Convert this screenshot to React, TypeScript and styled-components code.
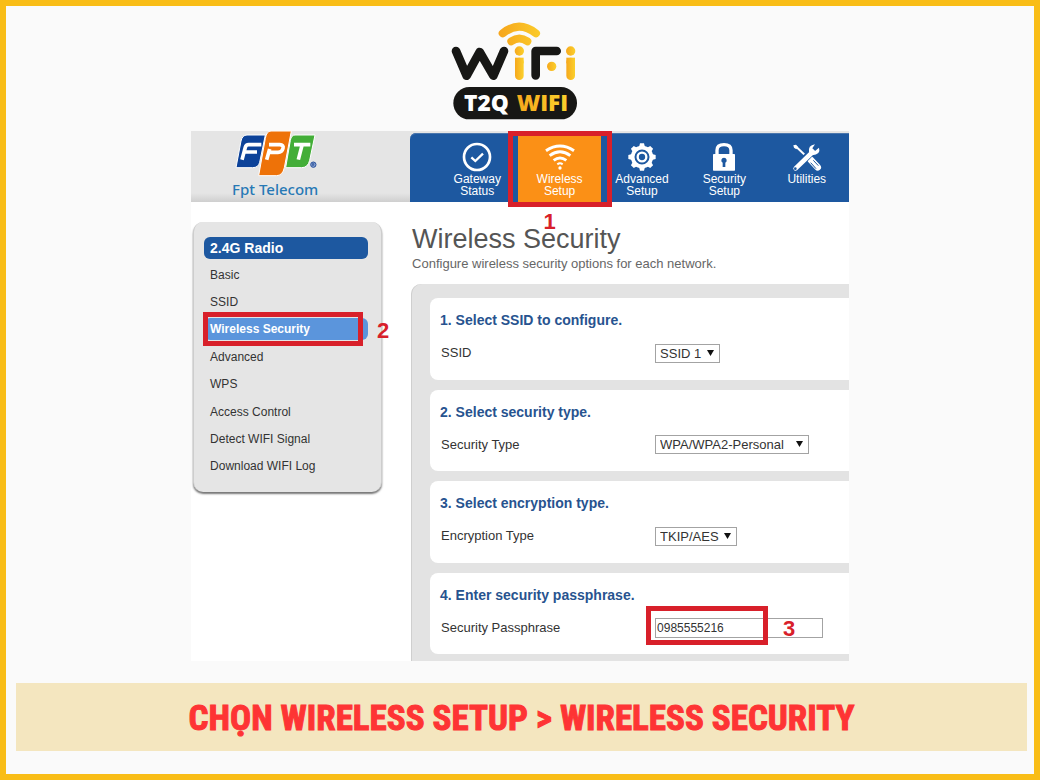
import React from "react";
import styled, { createGlobalStyle, css } from "styled-components";

const sans = `"Liberation Sans", Arial, sans-serif`;
const red = "#d8202a";

const GlobalStyle = createGlobalStyle`
  *, *::before, *::after { box-sizing: border-box; }
  body { margin: 0; background: #fafafa; font-family: ${sans}; }
  h1, h2, h3, p, ul { margin: 0; padding: 0; }
`;

const Page = styled.div`
  min-height: 100vh;
  display: flex;
  flex-direction: column;
  align-items: center;
  padding: 14px 0 23px;
  border: 6px solid #f9bd16;
  background: #fafafa;
`;

const BrandMark = styled.svg`
  display: block;
  width: 140px;
  height: 100px;
  flex: none;
`;

const Screen = styled.main`
  width: 64%;
  min-width: 600px;
  margin: 11px 0 22px;
  background: #fff;
  overflow: hidden;
`;

const TopBar = styled.header`
  position: relative;
  z-index: 2;
  display: grid;
  grid-template-columns: 219px 1fr;
  height: 71px;
  background: linear-gradient(#e5e5e5 0 62px, #cfcfcf 100%);
`;

const Carrier = styled.div`
  display: flex;
  flex-direction: column;
  padding-left: 41px;
`;

const CarrierLogo = styled.svg`
  display: block;
  width: 86px;
  height: 46px;
`;

const CarrierName = styled.span`
  font: 500 15px/25px "Noto Sans", "Open Sans", sans-serif;
  color: #2779b5;
  white-space: nowrap;
`;

const Nav = styled.nav`
  display: grid;
  grid-template-columns: repeat(5, 1fr);
  margin-top: 2px;
  padding: 1px 1px 0 26px;
  background: #1d58a0;
  border-top-left-radius: 6px;
  box-shadow: inset 0 1px 0 #4a76ad;
`;

const NavItem = styled.a<{ $active?: boolean }>`
  position: relative;
  display: flex;
  flex-direction: column;
  align-items: center;
  padding-top: 8px;
  font-size: 12px;
  line-height: 12px;
  text-align: center;
  text-decoration: none;
  color: #fff;
  background: ${(p) => (p.$active ? "#fb9016" : "transparent")};
`;

const NavIcon = styled.svg`
  display: block;
  width: 32px;
  height: 30px;
  margin-bottom: 1px;
`;

const NavText = styled.span`
  width: min-content;
`;

const Body = styled.div`
  display: grid;
  grid-template-columns: 219px 1fr;
  align-items: start;
`;

const Sidebar = styled.aside`
  margin: 20px 28px 0 2px;
  padding: 15px 13px 12px 10px;
  border-radius: 10px;
  background: #e5e5e5;
  border: solid #cdcdcd;
  border-width: 0 1px;
  box-shadow: 0 2px 2px #777;
`;

const SideTitle = styled.h2`
  padding: 0 6px;
  border-radius: 6px;
  background: #1d58a0;
  color: #fff;
  font-size: 14px;
  line-height: 22px;
`;

const SideList = styled.ul`
  display: grid;
  grid-auto-rows: 1fr;
  align-items: center;
  min-height: 221px;
  padding-top: 2px;
  list-style: none;
`;

const SideItem = styled.li`
  position: relative;
`;

const SideLink = styled.a<{ $active?: boolean }>`
  display: block;
  padding: 0 6px;
  border-radius: 6px;
  font-size: 12px;
  line-height: 22px;
  text-decoration: none;
  color: #333;
  white-space: nowrap;
  ${(p) =>
    p.$active &&
    css`
      background: #5b95dc;
      color: #fff;
      font-weight: bold;
    `}
`;

const Content = styled.section`
  padding-top: 21px;
`;

const Title = styled.h1`
  padding-left: 2px;
  font-size: 27px;
  line-height: 32px;
  font-weight: normal;
  color: #555;
`;

const Subtitle = styled.p`
  padding-left: 2px;
  font-size: 13px;
  line-height: 18px;
  color: #666;
`;

const Steps = styled.form`
  display: grid;
  grid-auto-rows: 1fr;
  gap: 10px;
  min-height: 377px;
  margin: 11px 0 0 1px;
  padding: 14px 0 7px 19px;
  background: #e3e3e3;
  border-top-left-radius: 10px;
  box-shadow: inset 1px 0 0 #cfcfcf;
`;

const Step = styled.div`
  padding: 13px 10px;
  border-radius: 8px 0 0 8px;
  background: #fff;
`;

const StepTitle = styled.h3`
  font-size: 14px;
  line-height: 18px;
  color: #27538f;
`;

const Field = styled.div`
  display: grid;
  grid-template-columns: 214px 1fr;
  align-items: center;
  margin: 14px 0 0 1px;
  font-size: 13px;
  line-height: 20px;
  color: #333;
`;

const SelectBox = styled.span<{ $width: number }>`
  position: relative;
  display: block;
  width: ${(p) => p.$width}px;
  height: 19px;
`;

const Select = styled.select`
  appearance: none;
  display: block;
  width: 100%;
  height: 100%;
  padding: 0 0 0 4px;
  border: 1px solid #a3a3a3;
  border-radius: 0;
  background: #fff;
  font: 13px/17px ${sans};
  color: #333;
`;

const Arrow = styled.svg`
  position: absolute;
  right: 6px;
  top: 6px;
  width: 7px;
  height: 6px;
  pointer-events: none;
`;

const InputBox = styled.span`
  position: relative;
  display: block;
  width: 168px;
`;

const Input = styled.input`
  display: block;
  width: 100%;
  height: 20px;
  padding: 0 1px;
  border: 1px solid #a3a3a3;
  background: #fff;
  font: 12px/18px ${sans};
  color: #333;
`;

const outlines = {
  nav: "inset: -3px -11px -5px -10px;",
  side: "inset: -6px 5px -6px -1px;",
  input: "inset: -12px 55px -7px -9px;",
};

const Outline = styled.span<{ $around: keyof typeof outlines }>`
  position: absolute;
  z-index: 1;
  ${(p) => outlines[p.$around]}
  border: 5px solid ${red};
  pointer-events: none;
`;

const markers = {
  nav: "left: 25px; top: 77px;",
  side: "left: 173px; top: 2px;",
  input: "left: 128px; top: 0;",
};

const Marker = styled.span<{ $near: keyof typeof markers }>`
  position: absolute;
  z-index: 1;
  ${(p) => markers[p.$near]}
  font: bold 22px/22px ${sans};
  color: ${red};
`;

const Banner = styled.footer`
  align-self: stretch;
  display: flex;
  justify-content: center;
  height: 68px;
  margin: 0 7px 0 10px;
  background: #f4e6bf;
  color: #fe3434;
  font: bold 35px/72px "Liberation Sans Narrow", "Roboto Condensed", "Open Sans Condensed", ${sans};
  white-space: nowrap;
  -webkit-text-stroke: 1px #fe3434;
`;

function WifiBrand() {
  return (
    <BrandMark viewBox="60 30 420 300" role="img" aria-label="T2Q WIFI">
      <defs>
        <linearGradient id="gold" x1="0" x2="1" y1="0" y2="0">
          <stop offset="0" stopColor="#f6a81c" />
          <stop offset="1" stopColor="#fbd02c" />
        </linearGradient>
        <linearGradient id="goldArc" gradientUnits="userSpaceOnUse" x1="205" x2="330" y1="0" y2="0">
          <stop offset="0" stopColor="#f6a51c" />
          <stop offset="1" stopColor="#fbcb2a" />
        </linearGradient>
      </defs>
      <g fill="none" strokeLinecap="round" strokeLinejoin="round">
        <path d="M218 70Q267 30 318 70" stroke="url(#goldArc)" strokeWidth="24" />
        <path d="M244 94Q268 77 292 94" stroke="url(#goldArc)" strokeWidth="24" />
        <path d="M78 123L110 197L149 126L190 197L222 123" stroke="#171715" strokeWidth="26" />
        <path d="M317 196V123H380" stroke="#171715" strokeWidth="26" />
      </g>
      <g fill="url(#gold)">
        <circle cx="268" cy="123" r="14" />
        <rect x="255" y="143" width="26" height="67" rx="13" />
        <path d="M255 143H281V160H255Z" />
        <circle cx="365" cy="169" r="14" />
        <circle cx="422" cy="123" r="14" />
        <rect x="409" y="143" width="26" height="67" rx="13" />
        <path d="M409 143H435V160H409Z" />
      </g>
      <rect x="70" y="231" width="371" height="97" rx="48" fill="#171715" />
      <g fontFamily='"Open Sans", sans-serif' fontWeight="800" fontSize="68">
        <text x="102" y="304" fill="#fff">T2Q</text>
        <text x="260" y="304" fill="url(#gold)">WIFI</text>
      </g>
    </BrandMark>
  );
}

function FptLogo() {
  return (
    <CarrierLogo viewBox="141 18 258 138" role="img" aria-label="FPT">
      <path d="M186 30H241L224 112Q220 128 203 128H153L168 48Q172 30 186 30Z" fill="#0c4299" stroke="#fff" strokeWidth="3" />
      <path d="M330 30H390L374 106Q369 128 350 128H302L316 46Q319 30 330 30Z" fill="#43ae38" stroke="#fff" strokeWidth="3" />
      <path d="M258 18H319L298 128Q293 152 274 152H221L241 40Q245 18 258 18Z" fill="#ee7208" stroke="#fff" strokeWidth="3" />
      <g fill="none" stroke="#fff" strokeWidth="11">
        <path d="M171 104L181 67Q183 59 191 59H229M178 81H216" />
        <path d="M245 104L254 72M252 59H284Q297 60 294 70Q291 82 279 82H254" />
        <path d="M327 59H376M351 61L340 104" />
      </g>
      <circle cx="385" cy="119" r="8" fill="#8fa6d3" stroke="#27509c" strokeWidth="3" />
      <path d="M382 123V115H387V119H383L388 123" fill="none" stroke="#27509c" strokeWidth="2" />
    </CarrierLogo>
  );
}

const icons = {
  gateway: (
    <g fill="none" stroke="#fff">
      <circle cx="48" cy="45" r="39" strokeWidth="8" />
      <path d="M31 46L43 57L66 35" strokeWidth="7" />
    </g>
  ),
  wireless: (
    <g fill="none" stroke="#fff" strokeWidth="9">
      <path d="M6 26Q48 -2 90 26" />
      <path d="M17 41Q48 18 79 41" />
      <path d="M29 55Q48 41 67 55" />
      <path d="M40 67Q48 61 56 67" strokeWidth="6" />
      <circle cx="48" cy="78" r="5" fill="#fff" stroke="none" />
    </g>
  ),
  advanced: (
    <g fill="none" stroke="#fff">
      <circle cx="48" cy="45" r="28" strokeWidth="11" />
      <g fill="#fff" stroke="none">
        {[0, 45, 90, 135, 180, 225, 270, 315].map((a) => (
          <path key={a} d="M39 15L42 4H54L57 15Z" transform={`rotate(${a} 48 45)`} />
        ))}
      </g>
      <circle cx="48" cy="45" r="13" strokeWidth="7" />
    </g>
  ),
  security: (
    <g>
      <path d="M27 40V25Q27 8 48 8T69 25V40" fill="none" stroke="#fff" strokeWidth="10" />
      <rect x="15" y="36" width="66" height="50" rx="2" fill="#fff" />
      <path d="M48 47a8 8 0 0 1 4 15V75H44V62a8 8 0 0 1 4-15Z" fill="#1d58a0" />
    </g>
  ),
  utilities: (
    <g>
      <path d="M14 13L52 49" stroke="#fff" strokeWidth="6" />
      <path d="M7 10L15 8L21 15L16 22L9 17Z" fill="#fff" />
      <path d="M59 53L80 76" stroke="#fff" strokeWidth="20" strokeLinecap="round" />
      <path d="M59 62L75 80M67 55L82 71" stroke="#1d58a0" strokeWidth="3" />
      <path d="M14 78L68 24" stroke="#1d58a0" strokeWidth="22" />
      <path d="M14 79L65 30" stroke="#fff" strokeWidth="14" strokeLinecap="round" />
      <path d="M72 7Q50 10 54 32Q66 45 82 33Q87 26 84 17L72 27L64 19Z" fill="#fff" />
      <circle cx="13" cy="80" r="4" fill="#1d58a0" />
    </g>
  ),
};

const navItems: { icon: keyof typeof icons; label: string; active?: boolean }[] = [
  { icon: "gateway", label: "Gateway Status" },
  { icon: "wireless", label: "Wireless Setup", active: true },
  { icon: "advanced", label: "Advanced Setup" },
  { icon: "security", label: "Security Setup" },
  { icon: "utilities", label: "Utilities" },
];

const sideItems = [
  "Basic",
  "SSID",
  "Wireless Security",
  "Advanced",
  "WPS",
  "Access Control",
  "Detect WIFI Signal",
  "Download WIFI Log",
];

const choices = [
  { id: "ssid", title: "1. Select SSID to configure.", label: "SSID", value: "SSID 1", width: 65 },
  { id: "security", title: "2. Select security type.", label: "Security Type", value: "WPA/WPA2-Personal", width: 154 },
  { id: "encryption", title: "3. Select encryption type.", label: "Encryption Type", value: "TKIP/AES", width: 82 },
];

export default function App() {
  return (
    <>
      <GlobalStyle />
      <Page>
        <WifiBrand />
        <Screen>
          <TopBar>
            <Carrier>
              <FptLogo />
              <CarrierName>Fpt Telecom</CarrierName>
            </Carrier>
            <Nav>
              {navItems.map((n) => (
                <NavItem key={n.icon} href="#" $active={n.active}>
                  <NavIcon viewBox="0 0 96 90" aria-hidden="true">{icons[n.icon]}</NavIcon>
                  <NavText>{n.label}</NavText>
                  {n.active && (
                    <>
                      <Outline $around="nav" />
                      <Marker $near="nav">1</Marker>
                    </>
                  )}
                </NavItem>
              ))}
            </Nav>
          </TopBar>
          <Body>
            <Sidebar>
              <SideTitle>2.4G Radio</SideTitle>
              <SideList>
                {sideItems.map((s) => {
                  const active = s === "Wireless Security";
                  return (
                    <SideItem key={s}>
                      <SideLink href="#" $active={active}>{s}</SideLink>
                      {active && (
                        <>
                          <Outline $around="side" />
                          <Marker $near="side">2</Marker>
                        </>
                      )}
                    </SideItem>
                  );
                })}
              </SideList>
            </Sidebar>
            <Content>
              <Title>Wireless Security</Title>
              <Subtitle>Configure wireless security options for each network.</Subtitle>
              <Steps>
                {choices.map((c) => (
                  <Step key={c.id}>
                    <StepTitle>{c.title}</StepTitle>
                    <Field>
                      <label htmlFor={c.id}>{c.label}</label>
                      <SelectBox $width={c.width}>
                        <Select id={c.id}>
                          <option>{c.value}</option>
                        </Select>
                        <Arrow viewBox="0 0 7 6" aria-hidden="true">
                          <path d="M0 0H7L3.5 6Z" fill="#111" />
                        </Arrow>
                      </SelectBox>
                    </Field>
                  </Step>
                ))}
                <Step>
                  <StepTitle>4. Enter security passphrase.</StepTitle>
                  <Field>
                    <label htmlFor="passphrase">Security Passphrase</label>
                    <InputBox>
                      <Input id="passphrase" type="text" defaultValue="0985555216" />
                      <Outline $around="input" />
                      <Marker $near="input">3</Marker>
                    </InputBox>
                  </Field>
                </Step>
              </Steps>
            </Content>
          </Body>
        </Screen>
        <Banner>CHỌN WIRELESS SETUP &gt; WIRELESS SECURITY</Banner>
      </Page>
    </>
  );
}
